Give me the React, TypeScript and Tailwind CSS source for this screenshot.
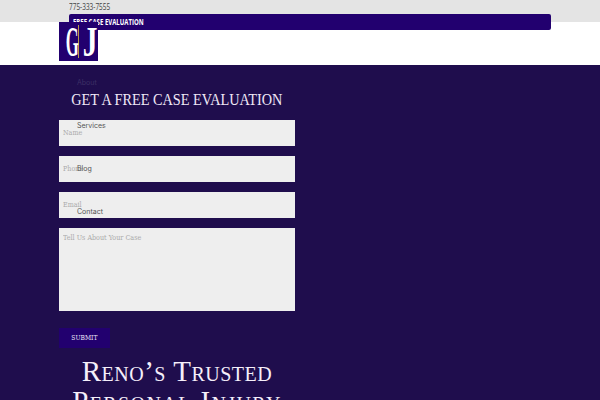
import React from "react";

const serif = "font-['DejaVu_Serif',serif]";
const fieldClass = `h-[26px] w-full bg-[#eeeeee] px-[4px] text-[8px] text-[#ababab] flex items-center ${serif}`;
const squeeze = "inline-block origin-left scale-x-[0.8] whitespace-nowrap";

function NavItem({ label, top, color }: { label: string; top: string; color: string }) {
  return (
    <span className={`absolute left-[77px] ${top} ${color} font-['Inter',sans-serif] text-[7px] leading-[10px]`}>{label}</span>
  );
}

export default function App() {
  return (
    <div className="relative h-[400px] w-[600px] overflow-hidden bg-[#1f0d4d]">
      <header className="relative h-[65px] bg-white">
        <div className="h-[22px] bg-[#e4e4e4] pl-[69px] pt-[1px] font-['Open_Sans',sans-serif] text-[9px] leading-[11px] text-[#444444]">
          <span className="inline-block origin-left scale-x-[0.72] whitespace-nowrap">775-333-7555</span>
        </div>
        <div className="absolute left-[69px] top-[14px] flex h-[16px] w-[482px] items-center rounded-[2px] bg-[#22006f] pl-[4px] font-['Open_Sans',sans-serif] text-[9px] font-bold text-white">
          <span className="inline-block origin-left scale-x-[0.67] whitespace-nowrap">FREE CASE EVALUATION</span>
        </div>
        <div className="absolute left-[59px] top-[22px] flex h-[39px] w-[39px] items-center bg-[#22006f] pl-[2px] font-['Liberation_Serif',serif] text-[42px] font-bold leading-none text-white">
          <span className="inline-block w-[16px] scale-x-[0.4] text-center">G</span>
          <span className="ml-[1px] h-[33px] w-px shrink-0 bg-[#b89a4a]"></span>
          <span className="ml-[1px] inline-block w-[18px] scale-x-[0.7] text-center">J</span>
        </div>
      </header>

      <main className="ml-[59px] w-[236px]">
        <h2 className="mt-[25px] flex justify-center font-['Liberation_Serif',serif] text-[17px] leading-[20px] text-[#f0e9f7] whitespace-nowrap">
          <span className="inline-block scale-x-[0.84]">GET A FREE CASE EVALUATION</span>
        </h2>
        <form className="mt-[10px] flex flex-col">
          <div className={fieldClass}><span className={squeeze}>Name</span></div>
          <div className={`${fieldClass} mt-[10px]`}><span className={squeeze}>Phone</span></div>
          <div className={`${fieldClass} mt-[10px]`}><span className={squeeze}>Email</span></div>
          <div className={`mt-[10px] h-[83px] w-full bg-[#eeeeee] px-[4px] pt-[4px] text-[8px] leading-[11px] text-[#ababab] ${serif}`}>
            <span className={squeeze}>Tell Us About Your Case</span>
          </div>
          <div className={`mt-[17px] flex h-[20px] w-[51px] items-center justify-center bg-[#22006f] text-[8px] text-[#e9e0f5] ${serif}`}>
            <span className="inline-block scale-x-[0.75]">SUBMIT</span>
          </div>
        </form>
        <h1 className="mt-[8px] text-center font-['Liberation_Serif',serif] text-[29px] leading-[30px] tracking-[0.5px] text-[#f5effa] [font-variant-caps:small-caps] whitespace-nowrap">
          Reno’s Trusted
          <br />
          <span className="tracking-[1.4px]">Personal Injury</span>
        </h1>
      </main>

      <NavItem label="About" top="top-[78px]" color="text-[#3d2f66]" />
      <NavItem label="Services" top="top-[121px]" color="text-[#555555]" />
      <NavItem label="Blog" top="top-[164px]" color="text-[#555555]" />
      <NavItem label="Contact" top="top-[207px]" color="text-[#555555]" />
    </div>
  );
}
